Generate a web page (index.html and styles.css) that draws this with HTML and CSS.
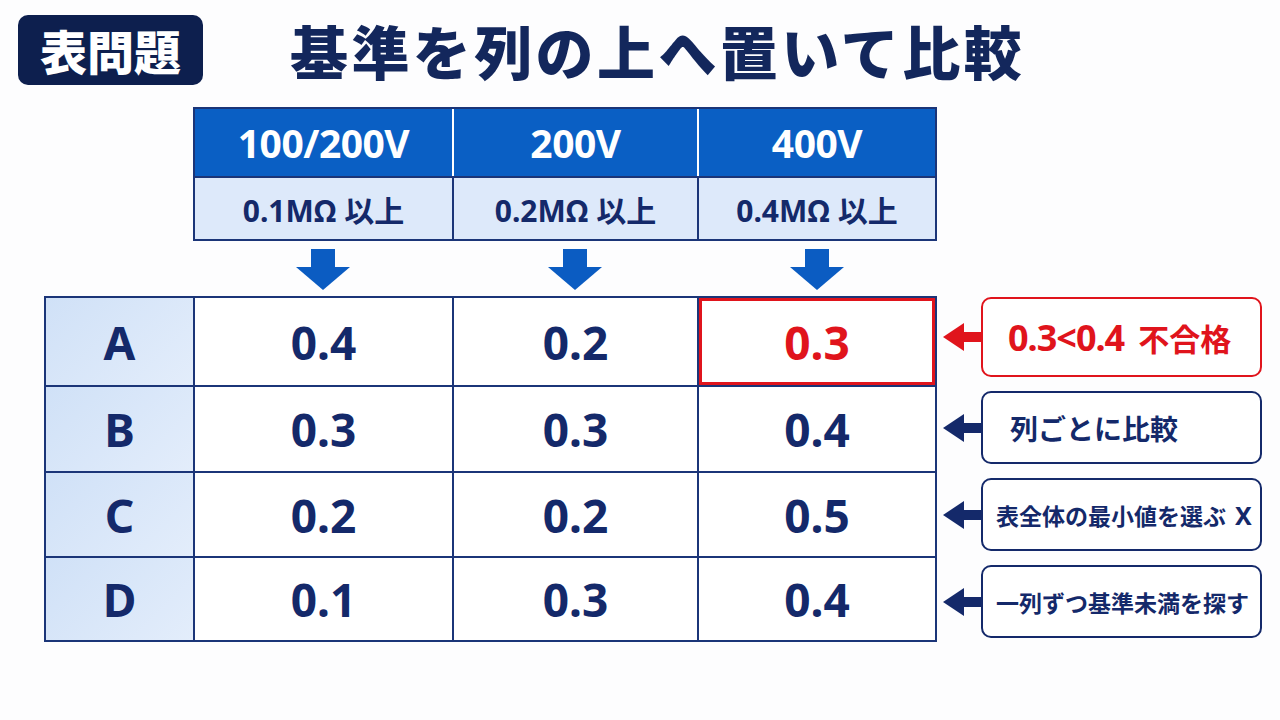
FILE: index.html
```html
<!DOCTYPE html>
<html lang="ja">
<head>
<meta charset="utf-8">
<title>表問題</title>
<link rel="stylesheet" href="styles.css">
</head>
<body>
<div class="page">
  <header class="top">
    <div class="badge">表問題</div>
    <h1 class="title">基準を列の上へ置いて比較</h1>
  </header>

  <div class="spec">
    <div class="spec-head">100/200V</div>
    <div class="spec-head">200V</div>
    <div class="spec-head">400V</div>
    <div class="spec-sub">0.1MΩ 以上</div>
    <div class="spec-sub">0.2MΩ 以上</div>
    <div class="spec-sub">0.4MΩ 以上</div>
  </div>

  <div class="downs">
    <div class="down"><svg width="54" height="41" viewBox="0 0 54 41"><rect x="15" y="0" width="24" height="19" fill="#0b5cc2"/><polygon points="0,18 54,18 27,41" fill="#0b5cc2"/></svg></div>
    <div class="down"><svg width="54" height="41" viewBox="0 0 54 41"><rect x="15" y="0" width="24" height="19" fill="#0b5cc2"/><polygon points="0,18 54,18 27,41" fill="#0b5cc2"/></svg></div>
    <div class="down"><svg width="54" height="41" viewBox="0 0 54 41"><rect x="15" y="0" width="24" height="19" fill="#0b5cc2"/><polygon points="0,18 54,18 27,41" fill="#0b5cc2"/></svg></div>
  </div>

  <div class="main">
    <div class="grid">
      <div class="cell label">A</div>
      <div class="cell">0.4</div>
      <div class="cell">0.2</div>
      <div class="cell bad">0.3</div>

      <div class="cell label row">B</div>
      <div class="cell row">0.3</div>
      <div class="cell row">0.3</div>
      <div class="cell row">0.4</div>

      <div class="cell label row">C</div>
      <div class="cell row">0.2</div>
      <div class="cell row">0.2</div>
      <div class="cell row">0.5</div>

      <div class="cell label row">D</div>
      <div class="cell row">0.1</div>
      <div class="cell row">0.3</div>
      <div class="cell row">0.4</div>
    </div>

    <div class="notes">
      <div class="note note--alert">
        <svg class="pointer" width="38" height="30" viewBox="0 0 38 30"><polygon points="0,15 21,1 21,29" fill="#e0141c"/><rect x="20" y="10" width="18" height="10" fill="#e0141c"/></svg>
        <div class="box box--alert"><span class="num">0.3&lt;0.4</span><span class="kanji">不合格</span></div>
      </div>
      <div class="note">
        <svg class="pointer" width="38" height="30" viewBox="0 0 38 30"><polygon points="0,15 21,1 21,29" fill="#14296a"/><rect x="20" y="10" width="18" height="10" fill="#14296a"/></svg>
        <div class="box box--wide">列ごとに比較</div>
      </div>
      <div class="note">
        <svg class="pointer" width="38" height="30" viewBox="0 0 38 30"><polygon points="0,15 21,1 21,29" fill="#14296a"/><rect x="20" y="10" width="18" height="10" fill="#14296a"/></svg>
        <div class="box box--small">表全体の最小値を選ぶ<span class="cross">X</span></div>
      </div>
      <div class="note">
        <svg class="pointer" width="38" height="30" viewBox="0 0 38 30"><polygon points="0,15 21,1 21,29" fill="#14296a"/><rect x="20" y="10" width="18" height="10" fill="#14296a"/></svg>
        <div class="box box--small">一列ずつ基準未満を探す</div>
      </div>
    </div>
  </div>
</div>
</body>
</html>
```

FILE: styles.css
```css
* { box-sizing: border-box; }

html, body {
  margin: 0;
  padding: 0;
  background: #fdfdfe;
}

body {
  width: 1280px;
  height: 720px;
  overflow: hidden;
  font-family: "Noto Sans", "Noto Sans CJK JP", sans-serif;
  font-weight: 700;
  color: #14296a;
}

.page {
  display: flex;
  flex-direction: column;
}

.top {
  display: flex;
  align-items: center;
  height: 70px;
  margin-top: 15px;
  padding-left: 18px;
}

.badge {
  width: 185px;
  height: 70px;
  border-radius: 10px;
  background: #0d1f4e;
  color: #ffffff;
  font-family: "Noto Sans CJK JP", sans-serif;
  font-weight: 900;
  font-size: 47px;
  line-height: 70px;
  text-align: center;
}

.title {
  margin: 0 0 0 87px;
  font-family: "Noto Sans CJK JP", sans-serif;
  font-weight: 900;
  font-size: 58px;
  letter-spacing: 3.4px;
  color: #13275c;
  line-height: 70px;
}

.spec {
  margin: 22px 0 0 193px;
  width: 744px;
  display: grid;
  grid-template-columns: 257px 245px 238px;
  grid-template-rows: 67px 63px;
  border: 2px solid #1b3578;
}

.spec-head {
  background: #0a5fc4;
  color: #ffffff;
  font-size: 39px;
  display: flex;
  align-items: center;
  justify-content: center;
  border-left: 2px solid #ffffff;
  letter-spacing: -0.5px;
}

.spec-head:first-child { border-left: none; }

.spec-sub {
  background: #dde9fa;
  color: #14296a;
  font-size: 30px;
  display: flex;
  align-items: center;
  justify-content: center;
  border-top: 2px solid #1b3578;
  border-left: 2px solid #1b3578;
}

.spec-sub:nth-child(4) { border-left: none; }

.downs {
  margin: 8px 0 0 193px;
  width: 744px;
  height: 47px;
  display: grid;
  grid-template-columns: 259px 245px 240px;
}

.down {
  display: flex;
  justify-content: center;
  align-items: flex-start;
}

.down svg { display: block; }

.main {
  display: flex;
  align-items: flex-start;
  padding-left: 44px;
}

.grid {
  width: 893px;
  display: grid;
  grid-template-columns: 147px 259px 245px 238px;
  grid-template-rows: 87px 86px 85px 84px;
  border: 2px solid #1b3578;
  background: #ffffff;
}

.cell {
  display: flex;
  align-items: center;
  justify-content: center;
  font-size: 46px;
  color: #14296a;
  border-left: 2px solid #1b3578;
}

.cell.row { border-top: 2px solid #1b3578; }

.cell.label {
  border-left: none;
  background: linear-gradient(135deg, #d0e1f7 0%, #e3edfb 100%);
}

.cell.bad {
  color: #e0141c;
  box-shadow: inset 0 0 0 3px #e0141c;
}

.notes {
  margin-left: 6px;
  margin-top: 1px;
  width: 319px;
  display: flex;
  flex-direction: column;
  gap: 14px;
}

.note {
  display: flex;
  align-items: center;
  height: 73px;
}

.note--alert { height: 80px; }

.pointer {
  flex: none;
  display: block;
}

.box {
  flex: 1;
  height: 100%;
  border: 2.5px solid #14296a;
  border-radius: 10px;
  background: #ffffff;
  display: flex;
  align-items: center;
  color: #14296a;
  font-family: "Noto Sans CJK JP", sans-serif;
  font-weight: 700;
  white-space: nowrap;
}

.box--alert {
  border-color: #e0141c;
  color: #e0141c;
  padding-left: 25px;
}

.box--alert .num {
  font-family: "Noto Sans", sans-serif;
  font-size: 36px;
  letter-spacing: -1px;
}

.box--alert .kanji {
  font-size: 31px;
  margin-left: 14px;
}

.box--wide {
  padding-left: 27px;
  font-size: 28px;
}

.box--small {
  padding-left: 13px;
  font-size: 23px;
}

.cross {
  font-family: "Noto Sans", sans-serif;
  font-weight: 700;
  font-size: 25px;
  margin-left: 9px;
}
```
